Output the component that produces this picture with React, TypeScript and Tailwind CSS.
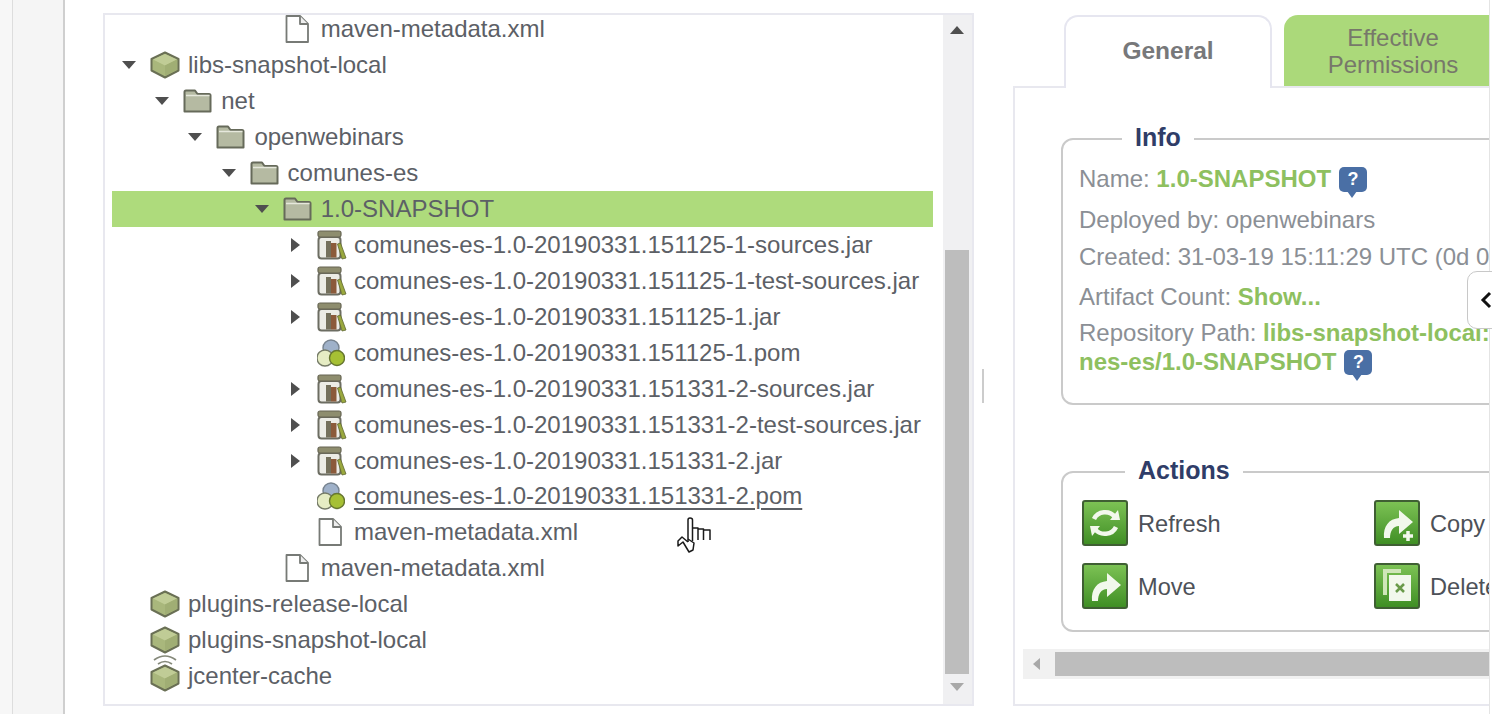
import type { ReactNode } from "react";

type NodeIcon = "repo" | "remote" | "folder" | "jar" | "pom" | "file";
type Toggle = "open" | "closed" | "none";

type TreeRow = {
  label: string;
  depth: number;
  icon: NodeIcon;
  toggle: Toggle;
  selected?: boolean;
  underline?: boolean;
};

const ROWS: TreeRow[] = [
  { label: "maven-metadata.xml", depth: 4, icon: "file", toggle: "none" },
  { label: "libs-snapshot-local", depth: 0, icon: "repo", toggle: "open" },
  { label: "net", depth: 1, icon: "folder", toggle: "open" },
  { label: "openwebinars", depth: 2, icon: "folder", toggle: "open" },
  { label: "comunes-es", depth: 3, icon: "folder", toggle: "open" },
  { label: "1.0-SNAPSHOT", depth: 4, icon: "folder", toggle: "open", selected: true },
  { label: "comunes-es-1.0-20190331.151125-1-sources.jar", depth: 5, icon: "jar", toggle: "closed" },
  { label: "comunes-es-1.0-20190331.151125-1-test-sources.jar", depth: 5, icon: "jar", toggle: "closed" },
  { label: "comunes-es-1.0-20190331.151125-1.jar", depth: 5, icon: "jar", toggle: "closed" },
  { label: "comunes-es-1.0-20190331.151125-1.pom", depth: 5, icon: "pom", toggle: "none" },
  { label: "comunes-es-1.0-20190331.151331-2-sources.jar", depth: 5, icon: "jar", toggle: "closed" },
  { label: "comunes-es-1.0-20190331.151331-2-test-sources.jar", depth: 5, icon: "jar", toggle: "closed" },
  { label: "comunes-es-1.0-20190331.151331-2.jar", depth: 5, icon: "jar", toggle: "closed" },
  { label: "comunes-es-1.0-20190331.151331-2.pom", depth: 5, icon: "pom", toggle: "none", underline: true },
  { label: "maven-metadata.xml", depth: 5, icon: "file", toggle: "none" },
  { label: "maven-metadata.xml", depth: 4, icon: "file", toggle: "none" },
  { label: "plugins-release-local", depth: 0, icon: "repo", toggle: "none" },
  { label: "plugins-snapshot-local", depth: 0, icon: "repo", toggle: "none" },
  { label: "jcenter-cache", depth: 0, icon: "remote", toggle: "none" },
];

function Cube() {
  return (
    <>
      <path d="M15 2.5 L28.5 9 V20.5 L15 27.5 L1.5 20.5 V9 Z" fill="#a9b77c" stroke="#6a7055" strokeWidth="2" strokeLinejoin="round" />
      <path d="M3 9.5 L15 15.5 L27 9.5 L15 4 Z" fill="#c0cc96" />
      <path d="M15 15.5 V26 L27 20 V9.5 Z" fill="#a0ae74" />
    </>
  );
}

function TreeIcon({ icon }: { icon: NodeIcon }) {
  if (icon === "repo") {
    return (
      <svg width="30" height="30" viewBox="0 0 30 30">
        <Cube />
      </svg>
    );
  }
  if (icon === "remote") {
    return (
      <svg width="30" height="38" viewBox="0 0 30 38" className="-mt-[6px]">
        <path d="M4 6 Q15 -2 26 6 M8 10 Q15 5 22 10" fill="none" stroke="#85897a" strokeWidth="1.7" />
        <g transform="translate(0 9)">
          <Cube />
        </g>
      </svg>
    );
  }
  if (icon === "folder") {
    return (
      <svg width="29" height="24" viewBox="0 0 29 24">
        <path d="M1.5 22.5 V3 Q1.5 1.5 3 1.5 H12 L14.5 5 H26 Q27.5 5 27.5 6.5 V22.5 Z" fill="#b5baa2" stroke="#666a5a" strokeWidth="2" strokeLinejoin="round" />
        <path d="M3 6.5 H26.5" stroke="#e6e8dc" strokeWidth="1.5" />
      </svg>
    );
  }
  if (icon === "jar") {
    return (
      <svg width="30" height="30" viewBox="0 0 30 30" className="ml-[3px]">
        <rect x="1.5" y="7" width="22" height="21.5" rx="3" fill="#ecece6" stroke="#6c6d62" strokeWidth="2" />
        <rect x="1" y="1" width="23" height="6" rx="2" fill="#8e8d6e" stroke="#666552" strokeWidth="1.2" />
        <rect x="9" y="11" width="5" height="16.5" fill="#74705c" />
        <rect x="14" y="13" width="5.5" height="14.5" fill="#8b5a3a" />
        <path d="M20.5 14 L23.5 13 L29 28 L25 29 Z" fill="#9aa83e" stroke="#5e6630" strokeWidth="0.8" />
      </svg>
    );
  }
  if (icon === "pom") {
    return (
      <svg width="28" height="28" viewBox="0 0 28 28" className="ml-[1px]">
        <circle cx="14" cy="9" r="8" fill="#9fb1c9" stroke="#77838f" strokeWidth="1.4" />
        <circle cx="8" cy="19" r="8" fill="#e6edc4" stroke="#767c68" strokeWidth="1.4" />
        <circle cx="20" cy="19" r="7.5" fill="#a6c034" stroke="#66762f" strokeWidth="1.4" />
      </svg>
    );
  }
  return (
    <svg width="24" height="28" viewBox="0 0 24 28">
      <path d="M1.5 1 H15 L23 9 V27 H1.5 Z" fill="#ffffff" stroke="#777a76" strokeWidth="1.8" strokeLinejoin="round" />
      <path d="M15 1 V9 H23" fill="#eeeeee" stroke="#777a76" strokeWidth="1.8" strokeLinejoin="round" />
    </svg>
  );
}

function RowToggle({ toggle }: { toggle: Toggle }) {
  if (toggle === "open") {
    return <span className="h-0 w-0 border-x-[7px] border-t-[8px] border-x-transparent border-t-[#4f4f4f]" />;
  }
  if (toggle === "closed") {
    return <span className="ml-[2px] h-0 w-0 border-y-[7px] border-l-[9px] border-y-transparent border-l-[#4f4f4f]" />;
  }
  return null;
}

function Row({ row }: { row: TreeRow }) {
  return (
    <div className={`flex h-[35.95px] shrink-0 items-center ${row.selected ? "bg-[#aedb7c]" : ""}`}>
      {/* each level is 33px wider; the leading spacer carries the indent */}
      {Array.from({ length: row.depth }).map((_, i) => (
        <span key={i} className="w-[33.2px] shrink-0" />
      ))}
      <span className="flex w-[34px] shrink-0 justify-center">
        <RowToggle toggle={row.toggle} />
      </span>
      <span className="flex w-[37px] shrink-0 justify-center">
        <TreeIcon icon={row.icon} />
      </span>
      <span className={`whitespace-nowrap pl-[5px] ${row.underline ? "underline underline-offset-[4px] decoration-[1.5px]" : ""}`}>
        {row.label}
      </span>
    </div>
  );
}

function TreePanel() {
  return (
    <div className="relative flex h-[693px] w-[871px] shrink-0 overflow-hidden border-2 border-[#e8e8ef] bg-white">
      <div className="flex-1 overflow-hidden pl-[7px] pr-[10px] text-[24px] text-[#5c6066]">
        <div className="-mt-[3.7px] flex flex-col">
          {ROWS.map((row, i) => (
            <Row key={i} row={row} />
          ))}
        </div>
      </div>
      <div className="flex w-[29px] shrink-0 flex-col items-center bg-[#f0f0f2] pr-[2px]">
        <span className="mt-[11px] h-0 w-0 border-x-[7px] border-b-[8px] border-x-transparent border-b-[#4f4f4f]" />
        <div className="mt-[216px] h-[424px] w-[24px] bg-[#bdbdbd]" />
        <span className="mt-[9px] h-0 w-0 border-x-[7px] border-t-[8px] border-x-transparent border-t-[#a8a8a8]" />
      </div>
    </div>
  );
}

function HelpBubble() {
  return (
    <span className="relative ml-[8px] inline-flex h-[25px] w-[28px] shrink-0 items-center justify-center rounded-[5px] bg-[#4a6fa5] text-[18px] font-bold leading-none text-white">
      ?
      <span className="absolute -bottom-[6px] left-[8px] h-0 w-0 border-x-[5px] border-t-[7px] border-x-transparent border-t-[#4a6fa5]" />
    </span>
  );
}

function Box({ title, className, children }: { title: string; className: string; children: ReactNode }) {
  return (
    <fieldset className={`w-[560px] shrink-0 rounded-[12px] border-2 border-[#cacaca] ${className}`}>
      <legend className="ml-[43px] px-[13px] text-[25px] font-bold leading-[28px] text-[#2f3d68]">
        <span className="relative -top-[2px]">{title}</span>
      </legend>
      {children}
    </fieldset>
  );
}

function InfoBox() {
  return (
    <Box title="Info" className="ml-[46px] mt-[37px] h-[280px] pl-[16px] text-[24px] text-[#8b8f95]">
      <div className="mt-[12px] flex h-[28px] items-center whitespace-nowrap">
        Name:&nbsp;<span className="font-bold text-[#8ec05f]">1.0-SNAPSHOT</span>
        <HelpBubble />
      </div>
      <div className="mt-[13px] h-[28px] whitespace-nowrap leading-[28px]">Deployed by: openwebinars</div>
      <div className="mt-[9px] h-[28px] whitespace-nowrap leading-[28px]">Created: 31-03-19 15:11:29 UTC (0d 0h 12m ago)</div>
      <div className="mt-[12px] h-[28px] whitespace-nowrap leading-[28px]">
        Artifact Count: <span className="font-bold text-[#8ec05f]">Show...</span>
      </div>
      <div className="mt-[8px] h-[28px] whitespace-nowrap leading-[28px]">
        Repository Path: <span className="font-bold text-[#8ec05f]">libs-snapshot-local:</span>
      </div>
      <div className="mt-[1px] flex h-[28px] items-center whitespace-nowrap font-bold text-[#8ec05f]">
        nes-es/1.0-SNAPSHOT
        <HelpBubble />
      </div>
    </Box>
  );
}

function ActionGlyph({ name }: { name: string }) {
  if (name === "Refresh") {
    return (
      <svg width="34" height="34" viewBox="0 0 34 34" fill="none" stroke="#f2f8ec" strokeWidth="4.5">
        <path d="M6 13 A12 11 0 0 1 27 11" />
        <path d="M28 21 A12 11 0 0 1 7 23" />
        <path d="M22 14 L32 14 L30 4 Z" fill="#f2f8ec" stroke="none" />
        <path d="M12 20 L2 20 L4 30 Z" fill="#f2f8ec" stroke="none" />
      </svg>
    );
  }
  if (name === "Delete") {
    return (
      <svg width="36" height="38" viewBox="0 0 36 38">
        <path d="M4 2 H22 V6 H8 V28 H4 Z" fill="#cfe6b8" />
        <rect x="10" y="8" width="22" height="26" fill="#f2f8ec" />
        <path d="M17 17 L25 25 M25 17 L17 25" stroke="#6a9a4a" strokeWidth="2.5" />
      </svg>
    );
  }
  return (
    <svg width="38" height="38" viewBox="0 0 38 38">
      <path d="M6 34 C5 22 11 15 21 14 V6 L35 18 L21 30 V22 C15 22 12 27 12 34 Z" fill="#f2f8ec" />
      {name === "Copy" && <path d="M30 27 V37 M25 32 H35" stroke="#f2f8ec" strokeWidth="3.5" />}
    </svg>
  );
}

function ActionButton({ name }: { name: string }) {
  return (
    <div className="flex items-center gap-[10px]">
      <span className="flex h-[46px] w-[46px] shrink-0 items-center justify-center overflow-hidden rounded-[3px] border-2 border-[#3f5f33] bg-gradient-to-b from-[#7cc254] to-[#3f8f24]">
        <ActionGlyph name={name} />
      </span>
      <span className="pt-[3px]">{name}</span>
    </div>
  );
}

function ActionsBox() {
  return (
    <Box title="Actions" className="ml-[46px] mt-[53px] h-[174px] pl-[19px] text-[23.6px] text-[#4d5158]">
      <div className="mt-[14px] grid grid-cols-[292px_1fr] gap-y-[17px]">
        <ActionButton name="Refresh" />
        <ActionButton name="Copy" />
        <ActionButton name="Move" />
        <ActionButton name="Delete" />
      </div>
    </Box>
  );
}

function RightPanel() {
  return (
    <div className="flex h-[693px] w-[476px] shrink-0 flex-col overflow-hidden">
      <div className="flex h-[75px] shrink-0 items-stretch border-b-2 border-[#e8e8ef] pt-[2px]">
        <div className="-mb-[2px] ml-[51px] flex w-[208px] shrink-0 items-center justify-center rounded-t-[14px] border-2 border-b-0 border-[#e6e6f0] bg-white pb-[2px] text-[24.5px] font-bold text-[#77787a]">
          General
        </div>
        <div className="ml-[12px] flex w-[218px] shrink-0 flex-col items-center justify-center rounded-t-[14px] bg-[#abd97a] text-[24px] leading-[27px] text-[#77786a]">
          <span>Effective</span>
          <span>Permissions</span>
        </div>
      </div>
      <div className="flex flex-1 flex-col border-b-2 border-l-2 border-[#e8e8ef]">
        <InfoBox />
        <ActionsBox />
        <div className="ml-[8px] mt-[17px] flex h-[30px] shrink-0 items-center bg-[#f1f1f1]">
          <span className="ml-[10px] h-0 w-0 border-y-[6px] border-r-[7px] border-y-transparent border-r-[#a8a8a8]" />
          <div className="ml-[15px] h-[24px] flex-1 bg-[#bdbdbd]" />
        </div>
      </div>
    </div>
  );
}

function HandCursor() {
  return (
    <svg width="36" height="36" viewBox="0 0 36 36" className="absolute left-[677px] top-[517px]" fill="none" stroke="#1a1a1a" strokeWidth="1.5" strokeLinejoin="round">
      <path d="M11 25 V3 Q11 1 13 1 Q15.5 1 15.5 3 V24" />
      <path d="M15.5 11 H21 V23 M21 12 H26.5 V23 M26.5 13 H33 V23" />
      <path d="M11 25 L5 20 L1 24 L1 29 L6 25 L12 35 L16 33 L17 26 L11 22" />
    </svg>
  );
}

export default function App() {
  return (
    <div className="relative flex h-[714px] w-[1492px] overflow-hidden bg-white font-['Liberation_Sans',Arial,sans-serif]">
      <div className="w-[13px] shrink-0 border-r border-[#dddddd] bg-[#f7f7f7]" />
      <div className="w-[52px] shrink-0 border-r-2 border-[#cfcfcf] bg-[#f5f5f5]" />
      <div className="ml-[38px] mt-[13px] flex items-start">
        <TreePanel />
        <div className="ml-[8px] mt-[356px] h-[34px] w-[2px] shrink-0 bg-[#cccccc]" />
        <div className="w-[29px] shrink-0" />
        <RightPanel />
      </div>
      <div className="w-[3px] shrink-0 border-l border-[#e4e4e4]" />
      <HandCursor />
      <div className="absolute left-[1467px] top-[271px] flex h-[58px] w-[30px] items-center rounded-l-[10px] border border-[#c8c8c8] bg-white pl-[12px]">
        <svg width="12" height="18" viewBox="0 0 12 18" fill="none" stroke="#111111" strokeWidth="3">
          <path d="M10 2 L3 9 L10 16" />
        </svg>
      </div>
    </div>
  );
}
